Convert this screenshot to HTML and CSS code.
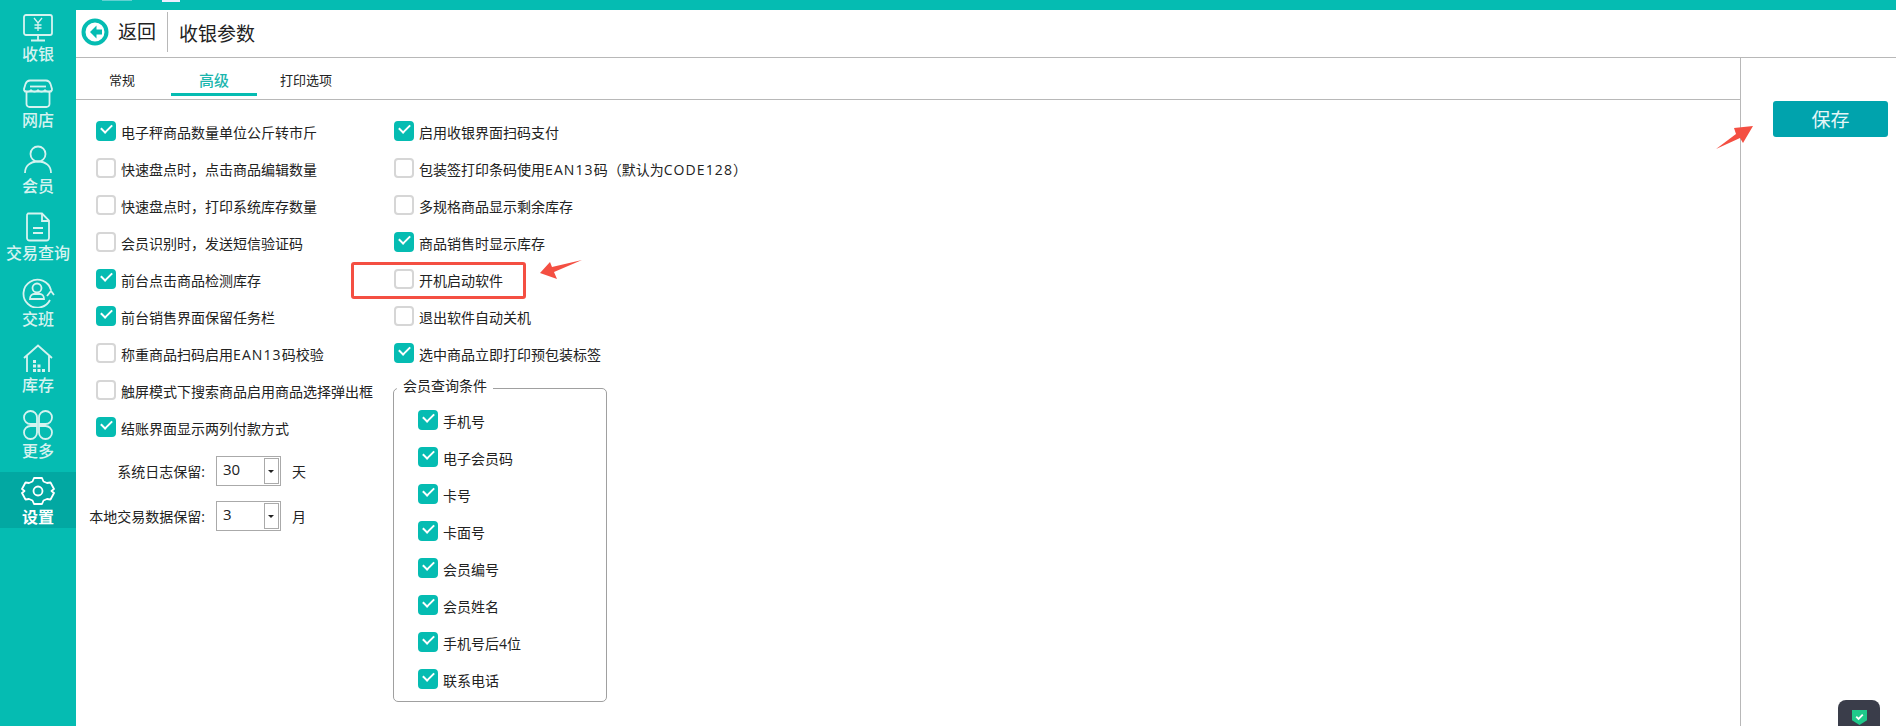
FILE: index.html
```html
<!DOCTYPE html>
<html lang="zh-CN">
<head>
  <meta charset="UTF-8">
  <title>收银参数</title>
  <link rel="stylesheet" href="styles.css">
</head>
<body>
  <!-- 左侧菜单 -->
  <nav class="sidebar">
    <a class="nav-item">
      <svg class="nav-icon" viewBox="0 0 34 30"><rect x="3" y="2" width="28" height="20" rx="2"/><path d="M17 22v5M10 27.500h14"/><path class="thin" d="M13 5l4 5 4-5M17 10v8M13.500 12h7M13.500 15h7"/></svg>
      <span>收银</span>
    </a>
    <a class="nav-item">
      <svg class="nav-icon" viewBox="0 0 34 30"><path d="M9 1.500h16a5 5 0 0 1 4.500 3.500l1.500 5a3 3 0 0 1-1 2.500H4a3 3 0 0 1-1-2.500L4.500 5A5 5 0 0 1 9 1.500z"/><path d="M5.500 13V25a3 3 0 0 0 3 3h17a3 3 0 0 0 3-3V13"/><path d="M9 7.500h16"/><path class="thin" d="M3 11q3.500 3.500 7 0q3.500 3.500 7 0q3.500 3.500 7 0q3.500 3.500 7 0"/></svg>
      <span>网店</span>
    </a>
    <a class="nav-item">
      <svg class="nav-icon" viewBox="0 0 34 30"><circle cx="17" cy="9" r="7.500"/><path d="M4 28c0-7 5-11.500 13-11.500S30 21 30 28"/></svg>
      <span>会员</span>
    </a>
    <a class="nav-item">
      <svg class="nav-icon" viewBox="0 0 34 30"><path d="M7 1.500h14l7 7V26a2.500 2.500 0 0 1-2.500 2.500h-17A2.500 2.500 0 0 1 6 26V4a2.500 2.500 0 0 1 1-2.500z"/><path d="M21 2v7h7M12 16h10M12 21h10"/></svg>
      <span>交易查询</span>
    </a>
    <a class="nav-item">
      <svg class="nav-icon" viewBox="0 0 34 30"><path d="M30 12A14 14 0 1 0 29 22"/><circle cx="16" cy="10" r="4.500"/><path d="M9 21c0-3 2-5 4-5h6c2 0 4 2 4 5z"/><path d="M26 18l4-5 3 4"/></svg>
      <span>交班</span>
    </a>
    <a class="nav-item">
      <svg class="nav-icon" viewBox="0 0 34 30"><path d="M3 14L17 1.500 31 14M6 12v16M28 12v16"/><path class="dots" d="M12 16h3v3h-3zM12 20.500h3v3h-3zM12 25h3v3h-3zM16.500 20.500h3v3h-3zM16.500 25h3v3h-3zM21 25h3v3h-3z"/></svg>
      <span>库存</span>
    </a>
    <a class="nav-item">
      <svg class="nav-icon" viewBox="0 0 34 30"><path d="M16 14H9.500A6.500 6.500 0 1 1 16 7.500z"/><path d="M18 14h6.500A6.500 6.500 0 1 0 18 7.500z"/><path d="M16 16H9.500A6.500 6.500 0 1 0 16 22.500z"/><path d="M18 16h6.500A6.500 6.500 0 1 1 18 22.500z"/></svg>
      <span>更多</span>
    </a>
    <a class="nav-item active">
      <svg class="nav-icon" viewBox="0 0 34 30"><path d="M13 2h8l1.500 3.500 3.500 1.500 3.500-.5L33 13l-2.500 2 2.500 2-3.500 6.500-3.500-.5-3.500 1.500L21 28h-8l-1.500-3.500L8 23l-3.500.5L1 17l2.500-2L1 13l3.500-6.500L8 7l3.500-1.500z" stroke-linejoin="round"/><circle cx="17" cy="15" r="4.500"/></svg>
      <span>设置</span>
    </a>
  </nav>

  <div class="main">
    <div class="titlebar"><i class="title-bit faint"></i><i class="title-bit"></i></div>

    <header class="header">
      <svg class="back-icon" viewBox="0 0 28 28"><circle cx="14" cy="14" r="11.500"/><path d="M15.500 7.500L9 14l6.500 6.500v-4H21v-5h-5.500z"/></svg>
      <span class="back-text">返回</span>
      <span class="page-title">收银参数</span>
    </header>

    <div class="content">
      <section class="panel">
        <div class="tabs">
          <a class="tab">常规</a>
          <a class="tab active">高级</a>
          <a class="tab">打印选项</a>
        </div>

        <div class="options">
          <div class="col col-first">
            <label class="check on"><i></i>电子秤商品数量单位公斤转市斤</label>
            <label class="check"><i></i>快速盘点时，点击商品编辑数量</label>
            <label class="check"><i></i>快速盘点时，打印系统库存数量</label>
            <label class="check"><i></i>会员识别时，发送短信验证码</label>
            <label class="check on"><i></i>前台点击商品检测库存</label>
            <label class="check on"><i></i>前台销售界面保留任务栏</label>
            <label class="check"><i></i><span>称重商品扫码启用<em>EAN13</em>码校验</span></label>
            <label class="check"><i></i>触屏模式下搜索商品启用商品选择弹出框</label>
            <label class="check on"><i></i>结账界面显示两列付款方式</label>

            <div class="spin-row">
              <span class="spin-label">系统日志保留:</span>
              <div class="spin"><span>30</span><b></b></div>
              <span class="spin-unit">天</span>
            </div>
            <div class="spin-row">
              <span class="spin-label">本地交易数据保留:</span>
              <div class="spin"><span>3</span><b></b></div>
              <span class="spin-unit">月</span>
            </div>
          </div>

          <div class="col">
            <label class="check on"><i></i>启用收银界面扫码支付</label>
            <label class="check"><i></i><span>包装签打印条码使用<em>EAN13</em>码（默认为<em>CODE128</em>）</span></label>
            <label class="check"><i></i>多规格商品显示剩余库存</label>
            <label class="check on"><i></i>商品销售时显示库存</label>
            <label class="check"><i></i>开机启动软件</label>
            <label class="check"><i></i>退出软件自动关机</label>
            <label class="check on"><i></i>选中商品立即打印预包装标签</label>

            <fieldset class="group">
              <legend>会员查询条件</legend>
              <label class="check on"><i></i>手机号</label>
              <label class="check on"><i></i>电子会员码</label>
              <label class="check on"><i></i>卡号</label>
              <label class="check on"><i></i>卡面号</label>
              <label class="check on"><i></i>会员编号</label>
              <label class="check on"><i></i>会员姓名</label>
              <label class="check on"><i></i>手机号后4位</label>
              <label class="check on"><i></i>联系电话</label>
            </fieldset>
          </div>
        </div>
      </section>

      <aside class="actions">
        <button class="save-btn">保存</button>
      </aside>
    </div>
  </div>

  <!-- 截图上的红色标注 -->
  <div class="mark-box"></div>
  <svg class="mark-arrow arrow-one" viewBox="0 0 42 20"><path d="M0 13L10 2l2 5L42 0 14 12l3 7z"/></svg>
  <svg class="mark-arrow arrow-two" viewBox="0 0 38 24"><path d="M0 24L20 9 18 3 37 1 27 18l-3-5z"/></svg>

  <div class="shield-badge">
    <svg viewBox="0 0 16 18"><path d="M0 1h16v11l-8 5-8-5z"/><path class="tick" d="M4.500 8l2.500 2.500L11.500 6"/></svg>
  </div>
</body>
</html>
```

FILE: styles.css
```css
html, body {
  margin: 0;
  padding: 0;
  width: 100%;
  height: 100%;
  background: white;
  overflow: hidden;
  font-family: "Open Sans", "Noto Sans CJK SC", sans-serif;
  color: #222;
  text-spacing-trim: space-all;
}

body {
  display: flex;
}

/* 左侧菜单 */
.sidebar {
  width: 76px;
  flex: none;
  box-sizing: border-box;
  padding-top: 9px;
  background: #05bcb2;
  display: flex;
  flex-direction: column;
  gap: 10.2px;
}

.nav-item {
  height: 56px;
  display: flex;
  flex-direction: column;
  align-items: center;
  color: #d6f3f0;
  font-size: 16px;
  font-weight: 500;
  line-height: 20px;
}

.nav-item.active {
  background: #02a8a2;
  color: white;
  font-weight: 700;
}

.nav-icon {
  width: 34px;
  height: 30px;
  margin-top: 4px;
  flex: none;
  fill: none;
  stroke: currentColor;
  stroke-width: 1.8;
}

.nav-icon .thin {
  stroke-width: 1.300;
}

.nav-icon .dots {
  fill: currentColor;
  stroke: none;
}

.nav-item span {
  margin-top: 1px;
}

.main {
  flex: 1;
  min-width: 0;
  display: flex;
  flex-direction: column;
}

.titlebar {
  height: 10px;
  flex: none;
  background: #05bcb2;
  display: flex;
  align-items: flex-start;
  gap: 30px;
  padding-left: 26px;
}

.title-bit {
  width: 18px;
  height: 2px;
  background: #eef;
}

.title-bit.faint {
  width: 30px;
  height: 1px;
  opacity: 0.4;
}

/* 顶部标题 */
.header {
  height: 47px;
  flex: none;
  border-bottom: 1px solid #b8b8b8;
  display: flex;
  align-items: center;
  padding-left: 5px;
}

.back-icon {
  width: 28px;
  height: 28px;
  margin-top: -3px;
}

.back-icon circle {
  fill: white;
  stroke: #05bcb2;
  stroke-width: 4;
}

.back-icon path {
  fill: #05bcb2;
}

.back-text {
  margin-left: 9px;
  padding-right: 11px;
  font-size: 19px;
  line-height: 40px;
  border-right: 1px solid #b8b8b8;
  margin-top: -3px;
}

.page-title {
  margin-left: 11px;
  font-size: 19px;
  margin-top: -1px;
}

.content {
  flex: 1;
  display: flex;
  min-height: 0;
}

.panel {
  width: 1664px;
  flex: none;
  border-right: 1px solid #b8b8b8;
}

/* 页签 */
.tabs {
  height: 41px;
  border-bottom: 1px solid #b8b8b8;
  display: flex;
  gap: 6px;
  padding-left: 3px;
}

.tab {
  width: 86px;
  height: 38px;
  box-sizing: border-box;
  text-align: center;
  font-size: 13px;
  line-height: 44px;
}

.tab.active {
  font-size: 15px;
  color: #1bb6ae;
  font-weight: 500;
  border-bottom: 3px solid #05bcb2;
}

/* 选项 */
.options {
  display: flex;
  padding: 13px 0 0 20px;
}

.col {
  width: 298px;
  flex: none;
}

.check {
  height: 37px;
  display: flex;
  align-items: center;
  font-size: 14px;
  white-space: nowrap;
}

.check em {
  font-style: normal;
  letter-spacing: 1.100px;
}

.check i {
  width: 20px;
  height: 20px;
  box-sizing: border-box;
  flex: none;
  margin: 0 5px 2px 0;
  border: 2px solid #d6d6d6;
  border-radius: 4px;
  position: relative;
}

.check.on i {
  background: #05bcb2;
  border-color: #05bcb2;
}

.check.on i::after {
  content: "";
  position: absolute;
  left: 3px;
  top: 1px;
  width: 9px;
  height: 5px;
  border-left: 2.500px solid white;
  border-bottom: 2.500px solid white;
  transform: rotate(-45deg);
}

.spin-row {
  height: 45px;
  display: flex;
  align-items: center;
  font-size: 14px;
}

.col-first .spin-row:first-of-type {
  margin-top: 2px;
}

.spin-label {
  width: 130px;
  margin-left: -21px;
  text-align: right;
  white-space: nowrap;
}

.spin {
  width: 65px;
  height: 30px;
  box-sizing: border-box;
  margin-left: 11px;
  border: 1px solid #aaa;
  display: flex;
  align-items: center;
  justify-content: space-between;
  font-size: 15px;
  padding-left: 6px;
}

.spin span {
  margin-top: -4px;
}

.spin b {
  width: 15px;
  height: 26px;
  box-sizing: border-box;
  border: 1px solid #aaa;
  margin-right: 1px;
  position: relative;
}

.spin b::after {
  content: "";
  position: absolute;
  left: 3px;
  top: 11px;
  border: 3px solid transparent;
  border-top: 3px solid #222;
}

.spin-unit {
  margin-left: 11px;
}

.group {
  width: 214px;
  height: 324px;
  box-sizing: border-box;
  margin: 6px 0 0 -1px;
  padding: 4px 0 0 24px;
  border: 1px solid #a0a0a0;
  border-radius: 5px;
}

.group legend {
  margin-left: -21px;
  padding: 0 6px 5px;
  font-size: 14px;
  line-height: 16px;
}

.group .check {
  height: 36.900px;
}

/* 右侧按钮 */
.actions {
  flex: 1;
  padding: 43px 8px 0 32px;
}

.save-btn {
  display: block;
  width: 115px;
  height: 36px;
  border: 0;
  border-radius: 3px;
  background: #00a3ad;
  color: #e6f6f7;
  font-family: inherit;
  font-size: 19px;
  padding: 0;
}

/* 标注 */
.mark-box {
  position: absolute;
  left: 351px;
  top: 262px;
  width: 175px;
  height: 37px;
  box-sizing: border-box;
  border: 3px solid #f44f42;
  border-radius: 3px;
}

.mark-arrow {
  position: absolute;
  fill: #f44f42;
}

.arrow-one {
  left: 540px;
  top: 260px;
  width: 42px;
  height: 20px;
}

.arrow-two {
  left: 1716px;
  top: 125px;
  width: 38px;
  height: 24px;
}

.shield-badge {
  position: absolute;
  left: 1838px;
  top: 700px;
  width: 42px;
  height: 26px;
  background: #3a3d4a;
  border-radius: 8px 8px 0 0;
  display: flex;
  justify-content: center;
  padding-top: 9px;
  box-sizing: border-box;
}

.shield-badge svg {
  width: 15px;
  height: 17px;
  fill: #1fc98a;
}

.shield-badge .tick {
  fill: none;
  stroke: white;
  stroke-width: 2;
}
```
